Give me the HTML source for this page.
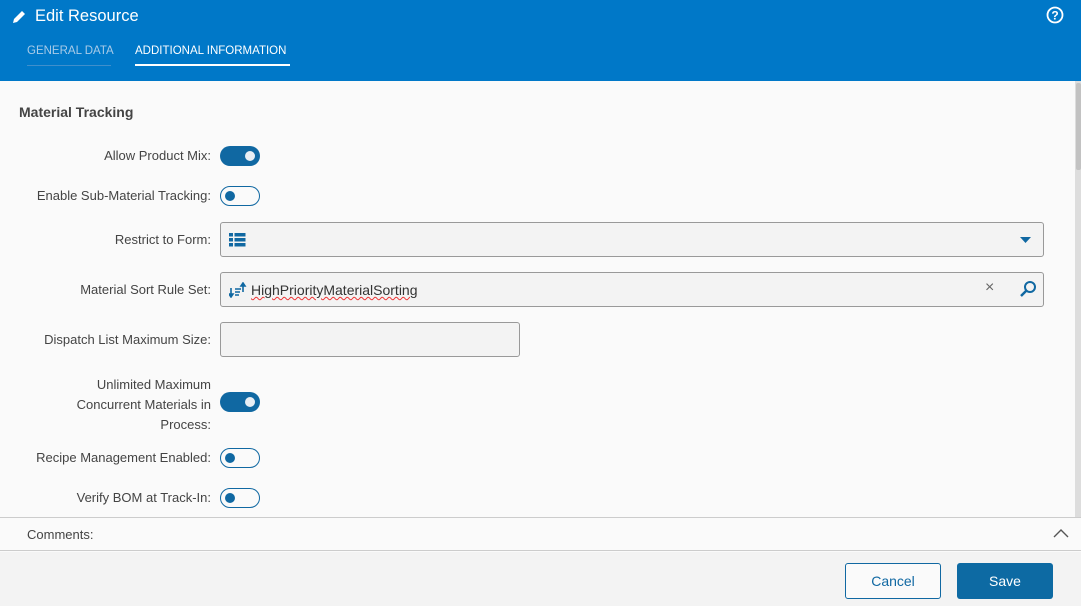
<!DOCTYPE html>
<html><head><style>
*{box-sizing:border-box;margin:0;padding:0}
body{width:1081px;height:606px;overflow:hidden;background:#fafafa;font-family:"Liberation Sans",sans-serif;color:#444;position:relative;font-size:13px}
.hdr{position:absolute;left:0;top:0;width:1081px;height:81px;background:#0078c8;color:#fff}
.title{position:absolute;left:35px;top:7px;font-size:16.5px}
.tab{position:absolute;top:45px;font-size:11.5px}
.lbl{position:absolute;right:870px;text-align:right;font-size:13px;color:#444;line-height:20px}
.tg{position:absolute;left:220px;width:40px;height:20px;border-radius:10px}
.on{background:#1068a2}
.on::after{content:"";position:absolute;right:5px;top:5px;width:10px;height:10px;border-radius:50%;background:#e8eef4}
.off{border:1.5px solid #1068a2;background:#fafafa}
.off::after{content:"";position:absolute;left:4px;top:3.5px;width:10px;height:10px;border-radius:50%;background:#1068a2}
.inp{position:absolute;left:220px;border:1px solid #999;border-radius:3px;background:#f3f3f3}
</style></head><body>
<div class="hdr">
<svg style="position:absolute;left:12px;top:10px" width="14" height="14" viewBox="0 0 14 14"><path d="M1 13 L2 9 L10 1 L13 4 L5 12 Z" fill="#fff"/></svg>
<div class="title">Edit Resource</div>
<svg style="position:absolute;left:1046px;top:6px" width="18" height="18" viewBox="0 0 18 18"><circle cx="9" cy="9" r="7.5" fill="none" stroke="#fff" stroke-width="1.8"/><text x="9" y="13.5" text-anchor="middle" font-size="12" font-weight="bold" fill="#fff" font-family="Liberation Sans">?</text></svg>
<div class="tab" style="left:27px;color:#a9cbe8">GENERAL DATA</div>
<div style="position:absolute;left:27px;top:65px;width:84px;height:1px;background:#3f8fcc"></div>
<div class="tab" style="left:135px">ADDITIONAL INFORMATION</div>
<div style="position:absolute;left:135px;top:64px;width:155px;height:2px;background:#fff"></div>
</div>
<div style="position:absolute;left:1075px;top:81px;width:6px;height:436px;background:#ddd"></div>
<div style="position:absolute;left:1076px;top:83px;width:5px;height:87px;background:#c2c2c2;border-radius:2px"></div>
<div style="position:absolute;left:19px;top:104px;font-size:14px;font-weight:bold;color:#444">Material Tracking</div>

<div class="lbl" style="top:146px">Allow Product Mix:</div><div class="tg on" style="top:146px"></div>
<div class="lbl" style="top:186px">Enable Sub-Material Tracking:</div><div class="tg off" style="top:186px"></div>
<div class="lbl" style="top:230px">Restrict to Form:</div>
<div class="inp" style="top:222px;width:824px;height:35px">
<svg style="position:absolute;left:8px;top:10px" width="17" height="14" viewBox="0 0 17 14"><g fill="#1068a2"><rect x="0" y="0" width="4" height="3.5"/><rect x="5.5" y="0" width="11" height="3.5"/><rect x="0" y="5" width="4" height="3.5"/><rect x="5.5" y="5" width="11" height="3.5"/><rect x="0" y="10" width="4" height="3.5"/><rect x="5.5" y="10" width="11" height="3.5"/></g></svg>
<svg style="position:absolute;left:799px;top:14px" width="12" height="7"><path d="M0 0H11L5.5 6Z" fill="#1068a2"/></svg>
</div>
<div class="lbl" style="top:280px">Material Sort Rule Set:</div>
<div class="inp" style="top:272px;width:824px;height:35px">
<svg style="position:absolute;left:8px;top:9px" width="18" height="16" viewBox="0 0 18 16"><g stroke="#1068a2" stroke-width="1.6" fill="#1068a2"><path d="M2 6V14"/><path d="M0 12L2 15L4 12Z"/><path d="M6 7H12M6 10H11M6 13H10"/><path d="M14 10V2"/><path d="M12 4L14 1L16 4Z"/></g></svg>
<span style="position:absolute;left:30px;top:9px;font-size:14px;color:#333;text-decoration:underline wavy #e33;text-decoration-thickness:1px">HighPriorityMaterialSorting</span>
<span style="position:absolute;left:764px;top:6px;font-size:16px;color:#666">×</span>
<svg style="position:absolute;left:798px;top:7px" width="18" height="18" viewBox="0 0 18 18"><circle cx="11" cy="7" r="5" fill="none" stroke="#1068a2" stroke-width="2"/><path d="M7.5 10.5L2 16" stroke="#1068a2" stroke-width="2.5"/></svg>
</div>
<div class="lbl" style="top:330px">Dispatch List Maximum Size:</div>
<div class="inp" style="top:322px;width:300px;height:35px"></div>
<div class="lbl" style="top:375px">Unlimited Maximum<br>Concurrent Materials in<br>Process:</div>
<div class="tg on" style="top:392px"></div>
<div class="lbl" style="top:448px">Recipe Management Enabled:</div><div class="tg off" style="top:448px"></div>
<div class="lbl" style="top:488px">Verify BOM at Track-In:</div><div class="tg off" style="top:488px"></div>

<div style="position:absolute;left:0;top:517px;width:1081px;height:34px;border-top:1px solid #ccc;border-bottom:1px solid #ccc;background:#fafafa">
<span style="position:absolute;left:27px;top:9px;font-size:13px;color:#444">Comments:</span>
<svg style="position:absolute;left:1053px;top:11px" width="16" height="10"><path d="M1 8L8 1L15 8" fill="none" stroke="#555" stroke-width="1.4"/></svg>
</div>
<div style="position:absolute;left:0;top:552px;width:1081px;height:54px;background:#f3f3f3"></div>
<div style="position:absolute;left:845px;top:563px;width:96px;height:36px;border:1px solid #1068a2;border-radius:3px;background:#fafafa;color:#1068a2;text-align:center;line-height:34px;font-size:14px">Cancel</div>
<div style="position:absolute;left:957px;top:563px;width:96px;height:36px;background:#0d6aa3;border-radius:3px;color:#fff;text-align:center;line-height:36px;font-size:14px">Save</div>
</body></html>
